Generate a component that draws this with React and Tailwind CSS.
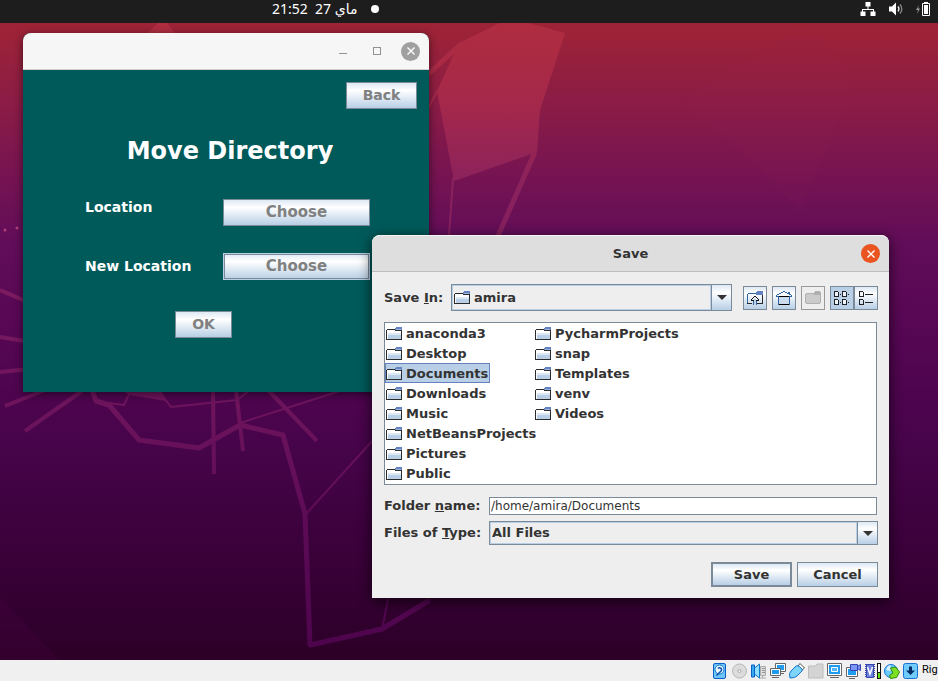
import React from "react";

const FONT = "font-['DejaVu_Sans',sans-serif]";
const metal = "bg-linear-to-b from-[#dde8f3] via-white via-30% to-[#b8cfe5]";

function Wallpaper() {
  return (
    <svg
      className="absolute inset-0 h-full w-full"
      viewBox="0 23 938 637"
      preserveAspectRatio="none"
      aria-hidden="true"
    >
      <defs>
        <linearGradient id="sky" x1="0" y1="0" x2="0" y2="1">
          <stop offset="0" stopColor="#9f2336" />
          <stop offset="0.13" stopColor="#8a1c46" />
          <stop offset="0.22" stopColor="#7a1550" />
          <stop offset="0.34" stopColor="#620d59" />
          <stop offset="0.5" stopColor="#550653" />
          <stop offset="0.66" stopColor="#47044a" />
          <stop offset="0.83" stopColor="#3a013a" />
          <stop offset="1" stopColor="#2c0027" />
        </linearGradient>
        <linearGradient id="ink" gradientUnits="userSpaceOnUse" x1="0" y1="23" x2="0" y2="660">
          <stop offset="0" stopColor="#b02d3f" />
          <stop offset="0.13" stopColor="#a4284b" />
          <stop offset="0.25" stopColor="#8b225c" />
          <stop offset="0.45" stopColor="#7a1a60" />
          <stop offset="0.6" stopColor="#6d145c" />
          <stop offset="0.8" stopColor="#5c0a56" />
          <stop offset="1" stopColor="#4c044c" />
        </linearGradient>
      </defs>
      <rect y="23" width="938" height="637" fill="url(#sky)" />
      <path d="M680 100L810 23L856 80L800 212L740 150Z" fill="#b03060" opacity="0.04" />
      <path d="M0 597L60 660H0Z" fill="#5c0a56" opacity="0.15" />
      <path
        d="M459 43L500 23H528L565 33L540 110L537 152L454 181L437 91L453 56Z"
        fill="url(#ink)"
      />
      <path d="M126 54L158 23H163L186 60Z M125 392L162 392L166 401L129 395Z" fill="url(#ink)" />
      <g fill="none" stroke="url(#ink)" strokeLinejoin="round">
        <path strokeWidth="5" d="M400 100L461 44M535 152L498 236M161 20L186 50" />
        <path strokeWidth="2" d="M453 178L449 236M437 91L410 145" />
        <path
          strokeWidth="4"
          d="M0 290L30 303M0 337L30 342M0 372L30 369M5 406L45 390M25 431L82 391M213 390L214 474M236 390L243 451M268 390L317 441"
        />
        <path
          strokeWidth="5"
          d="M92 390L96 401L109 405L139 440L199 448L240 425L283 435L305 514L310 645L382 629L430 600"
        />
        <path
          strokeWidth="2"
          d="M109 403L124 405L130 392M161 394L171 407L237 400L250 390M240 423L340 391M306 514L373 440M382 629L390 590"
        />
      </g>
      <g fill="#b0407a">
        <circle cx="5" cy="230" r="1.5" />
        <circle cx="17" cy="228" r="1.5" />
      </g>
    </svg>
  );
}

function TopBar() {
  return (
    <header className="flex h-[23px] shrink-0 items-center justify-between bg-[#1d1d1d] pr-[7px] pb-[5px] text-white">
      <div className="flex items-center gap-3.5 pl-[272px] text-[14px] leading-[18px]">
        <time dir="rtl" className="whitespace-pre font-['Noto_Sans','DejaVu_Sans',sans-serif]">
          {"ماي 27  21:52"}
        </time>
        <span className="size-2 rounded-full bg-white" />
      </div>
      <div className="flex items-center gap-3">
        <svg width="16" height="14" viewBox="0 0 16 14" aria-label="Network" fill="#fff">
          <path d="M5.500 0h5v4.500h-2v2.500h5.500v2.500h1.500v4.500h-5v-4.500h2.500v-1.500h-10v1.500h2.500v4.500h-5v-4.500h1.500v-2.500h5.500v-2.500h-2z" />
        </svg>
        <svg width="16" height="14" viewBox="0 0 16 14" aria-label="Volume" fill="none">
          <path d="M1 4.500h3l4-4v13l-4-4h-3z" fill="#fff" />
          <path d="M10 4.500q2 2.500 0 5" stroke="#eee" strokeWidth="1.300" />
          <path d="M12 2.500q3.600 4.500 0 9" stroke="#888" strokeWidth="1.300" />
        </svg>
        <svg width="15" height="16" viewBox="0 0 15 16" aria-label="Battery" fill="none">
          <path d="M3 4L0 9h2l-1 4L4 7.500H2z" fill="#999" />
          <path d="M6.500 2.500h7v12h-7z" stroke="#fff" />
          <path d="M8 4h4v9H8zM8 1h4v1H8z" fill="#fff" />
        </svg>
      </div>
    </header>
  );
}

function MoveButton({ children, className = "", focused = false }) {
  return (
    <button
      type="button"
      className={`h-[27px] border pb-px leading-[24px] font-bold text-[#808080] ${metal} ${
        focused ? "border-[#b8cfe5] shadow-[inset_0_0_0_1px_#7a8a99]" : "border-[#7a8a99]"
      } ${className}`}
    >
      {children}
    </button>
  );
}

function MoveWindow() {
  return (
    <section
      aria-label="Move Directory"
      className="absolute top-[10px] left-[23px] flex h-[359px] w-[406px] flex-col overflow-hidden rounded-t-lg bg-[#005a5a] shadow-[0_2px_8px_rgba(0,0,0,0.55)]"
    >
      <div className="flex h-[37px] shrink-0 items-center justify-end gap-6 border-b border-[#cfcfcf] bg-[#f6f6f6] pr-[9px]">
        <button type="button" aria-label="Minimize" className="flex h-4 w-2 items-center">
          <span className="mt-[5px] h-px w-2 bg-[#929292]" />
        </button>
        <button type="button" aria-label="Maximize" className="ml-0.5 size-2 border border-[#929292]" />
        <button
          type="button"
          aria-label="Close"
          className="-ml-1 flex size-[19px] items-center justify-center rounded-full bg-[#a0a0a0]"
        >
          <svg width="8" height="8" viewBox="0 0 8 8" stroke="#fff" strokeWidth="1.400" aria-hidden="true">
            <path d="M0.500 0.500l7 7M7.500 0.500l-7 7" />
          </svg>
        </button>
      </div>
      <div className="flex flex-col text-[14px] text-white">
        <div className="flex justify-end pt-3 pr-3">
          <MoveButton className="w-[71px]">Back</MoveButton>
        </div>
        <h1 className="mt-[26px] pl-2 text-center text-[24px] leading-8 font-bold">Move Directory</h1>
        <div className="mt-8 flex pl-[62px]">
          <span className="w-[138px] leading-4 font-bold">Location</span>
          <MoveButton className="w-[147px] text-[15px]">Choose</MoveButton>
        </div>
        <div className="mt-[27px] flex items-center pl-[62px]">
          <span className="w-[138px] font-bold">New Location</span>
          <MoveButton focused className="w-[147px] text-[15px]">
            Choose
          </MoveButton>
        </div>
        <div className="mt-[31px] pl-[152px]">
          <MoveButton className="w-[57px]">OK</MoveButton>
        </div>
      </div>
    </section>
  );
}

function Folder() {
  return (
    <svg
      width="16"
      height="13"
      viewBox="0 0 16 13"
      shapeRendering="crispEdges"
      aria-hidden="true"
      className="shrink-0"
    >
      <rect x="1" y="3" width="14" height="9" fill="#fff" />
      <rect x="2" y="6" width="13" height="2" fill="#dbe7f3" />
      <rect x="2" y="8" width="13" height="4" fill="#b8cfe5" />
      <path d="M0 3h1v9h-1zM1 2h8v1h-8zM0 12h16v1h-16zM15 3h1v9h-1zM9 3h6v1h-6z" fill="#2b2b2b" />
      <path d="M10 0h6v1h-6zM9 1h7v2h-7z" fill="#6382bf" />
      <rect x="10" y="2" width="5" height="1" fill="#9cb3dc" />
    </svg>
  );
}

function Arrow() {
  return (
    <span
      className={`pointer-events-none flex w-5 shrink-0 items-center justify-center border-l border-[#7a8a99] ${metal}`}
    >
      <svg width="10" height="5" viewBox="0 0 10 5" aria-hidden="true">
        <path d="M0 0h10l-5 5z" fill="#333" />
      </svg>
    </span>
  );
}

function Combo({ id, value, folder = false, className = "" }) {
  return (
    <div className={`flex border border-[#7a8a99] bg-[#eee] ${className}`}>
      <div className="flex min-w-0 flex-1 items-center gap-1 border border-[#b8cfe5] pl-px">
        {folder && <Folder />}
        <select id={id} className="min-w-0 flex-1 appearance-none bg-transparent font-bold text-[#333] outline-none">
          <option>{value}</option>
        </select>
      </div>
      <Arrow />
    </div>
  );
}

function ToolButton({ label, children, className = "", ...rest }) {
  return (
    <button
      type="button"
      aria-label={label}
      className={`flex size-6 shrink-0 items-center justify-center border ${className}`}
      {...rest}
    >
      {children}
    </button>
  );
}

function ToolBar() {
  return (
    <div className="flex">
      <ToolButton label="Up One Level" className={`mr-[5px] border-[#7a8a99] ${metal}`}>
        <svg width="16" height="14" viewBox="0 0 16 14" shapeRendering="crispEdges" aria-hidden="true">
          <path d="M0 3h1v10h-1zM1 2h8v1h-8z" fill="#31639c" />
          <path d="M0 12h5v1h-5zM10 12h6v1h-6zM15 4h1v9h-1z" fill="#2b2b2b" />
          <path d="M10 0h6v1h-6zM9 1h7v3h-7z" fill="#6382bf" />
          <path d="M6 9h1v5h-1zM9 9h1v5h-1z" fill="#31639c" />
          <path d="M7 8h2v5h-2z" fill="#b8cfe5" />
          <path d="M7 5h2v1h-2zM6 6h1v1h-1zM9 6h1v1h-1zM5 7h1v1h-1zM10 7h1v1h-1zM4 8h1v1h2v1h-3zM11 8h1v2h-3v-1h2z" fill="#111" />
        </svg>
      </ToolButton>
      <ToolButton label="Home" className={`mr-[5px] border-[#7a8a99] ${metal}`}>
        <svg width="16" height="14" viewBox="0 0 16 14" shapeRendering="crispEdges" aria-hidden="true">
          <path d="M3 6h10v7h-10z" fill="#c9dbec" />
          <path
            d="M7 0h2v1h-2zM5 1h2v1h-2zM9 1h2v1h-2zM3 2h2v1h-2zM11 2h1v-1h2v3h-1v-1h-2zM1 3h2v1h-2zM14 3h1v1h-1zM0 4h1v1h-1zM15 4h1v1h-1zM2 6h1v8h-1zM13 6h1v8h-1z"
            fill="#31639c"
          />
          <path d="M0 5h3v1h-3zM13 5h3v1h-3z" fill="#31639c" />
          <path d="M3 5h10v1h-10zM3 13h10v1h-10z" fill="#000" />
        </svg>
      </ToolButton>
      <ToolButton label="Create New Folder" disabled className="mr-[5px] border-[#999] bg-[#eee]">
        <svg width="16" height="13" viewBox="0 0 16 13" shapeRendering="crispEdges" aria-hidden="true">
          <path d="M1 2h8v-1h1v-1h5v1h1v11h-1v1h-14v-1h-1v-9h1z" fill="#b0b0b0" />
          <path d="M1 3h8v1h6v8h-14z" fill="#cbcbcb" />
        </svg>
      </ToolButton>
      <ToolButton label="List" aria-pressed="true" className="border-[#7a8a99] bg-[#b8cfe5]">
        <svg width="16" height="14" viewBox="0 0 16 14" shapeRendering="crispEdges" aria-hidden="true">
          <path d="M1 1h3v4h-3zM9 1h3v4h-3zM1 9h3v4h-3zM9 9h3v4h-3z" fill="#eef4fb" />
          <path
            fillRule="evenodd"
            fill="#222"
            d="M0 0h4v1h1v5h-5zM1 1v4h3v-4zM8 0h4v1h1v5h-5zM9 1v4h3v-4zM0 8h4v1h1v5h-5zM1 9v4h3v-4zM8 8h4v1h1v5h-5zM9 9v4h3v-4zM6 3h1v1h-1zM14 3h1v1h-1zM6 11h1v1h-1zM14 11h1v1h-1z"
          />
        </svg>
      </ToolButton>
      <ToolButton label="Details" className={`border-[#7a8a99] ${metal}`}>
        <svg width="14" height="14" viewBox="0 0 14 14" shapeRendering="crispEdges" aria-hidden="true">
          <path
            fillRule="evenodd"
            fill="#222"
            d="M0 0h4v1h1v5h-5zM1 1v4h3v-4zM0 8h4v1h1v5h-5zM1 9v4h3v-4zM6 3h8v1h-8zM6 11h8v1h-8z"
          />
        </svg>
      </ToolButton>
    </div>
  );
}

const folders = [
  ["anaconda3", "Desktop", "Documents", "Downloads", "Music", "NetBeansProjects", "Pictures", "Public"],
  ["PycharmProjects", "snap", "Templates", "venv", "Videos"],
];

function SaveDialog() {
  return (
    <section
      role="dialog"
      aria-label="Save"
      className="absolute top-[212px] left-[372px] flex w-[517px] flex-col rounded-t-lg bg-[#eee] text-[13px] font-bold text-[#333] shadow-[0_3px_14px_rgba(0,0,0,0.7)]"
    >
      <div className="flex h-[37px] items-center rounded-t-lg border-t border-b border-t-[#f4f4f4] border-b-[#bcbcbc] bg-[#dedede] pr-[9px] pl-7">
        <h2 className="flex-1 text-center">Save</h2>
        <button
          type="button"
          aria-label="Close"
          className="flex size-[19px] items-center justify-center rounded-full bg-[#e95420]"
        >
          <svg width="8" height="8" viewBox="0 0 8 8" stroke="#fff" strokeWidth="1.400" aria-hidden="true">
            <path d="M0.500 0.500l7 7M7.500 0.500l-7 7" />
          </svg>
        </button>
      </div>
      <div className="flex flex-col pt-3 pr-[11px] pb-[11px] pl-3">
        <div className="flex items-center">
          <label htmlFor="save-in" className="w-[67px] shrink-0 whitespace-nowrap">
            Save <u>I</u>n:
          </label>
          <Combo id="save-in" value="amira" folder className="mr-[11px] h-[27px] flex-1" />
          <ToolBar />
        </div>
        <div className="mt-[11px] mr-px flex h-[163px] border border-[#7a8a99] bg-white pl-px">
          {folders.map((column) => (
            <ul key={column[0]} className="w-[149px]">
              {column.map((name) => (
                <li key={name} className="flex h-5">
                  <span
                    className={
                      name === "Documents"
                        ? "-ml-px flex items-center gap-1 border border-[#6382bf] bg-[#b8cfe5] pr-px"
                        : "flex items-center gap-1"
                    }
                  >
                    <Folder />
                    <span className="pt-0.5 leading-4">{name}</span>
                  </span>
                </li>
              ))}
            </ul>
          ))}
        </div>
        <div className="mt-[11px] mr-px flex h-5 items-center">
          <label htmlFor="folder" className="w-[105px] shrink-0 whitespace-nowrap">
            Folder <u>n</u>ame:
          </label>
          <input
            id="folder"
            defaultValue="/home/amira/Documents"
            className="h-[18px] min-w-0 flex-1 border border-[#7a8a99] bg-white px-px text-[12px] font-normal outline-none"
          />
        </div>
        <div className="mt-[5px] flex items-center">
          <label htmlFor="file-type" className="w-[105px] shrink-0 whitespace-nowrap">
            Files of <u>T</u>ype:
          </label>
          <Combo id="file-type" value="All Files" className="h-6 flex-1" />
        </div>
        <div className="mt-[17px] flex justify-end gap-[5px]">
          <button type="button" className={`h-[25px] w-[81px] border-2 border-[#7a8a99] ${metal}`}>
            Save
          </button>
          <button type="button" className={`h-[25px] w-[81px] border border-[#7a8a99] ${metal}`}>
            Cancel
          </button>
        </div>
      </div>
    </section>
  );
}

function StatusBar() {
  return (
    <footer className="flex h-[21px] shrink-0 items-center justify-end gap-[3px] overflow-hidden bg-[#f0f0f0] font-['Roboto','Noto_Sans',sans-serif] text-[11px] text-black">
      <svg width="16" height="16" viewBox="0 0 16 16" aria-label="Hard disk">
        <rect x="0.500" y="0.500" width="12" height="15" rx="1.500" fill="#6fc4fa" stroke="#0a5fc8" />
        <circle cx="6.500" cy="6.500" r="4.500" fill="#e8f6ff" stroke="#1177cc" />
        <path d="M5 5.500a2 2 0 1 1 2.500 3l-4 4" fill="none" stroke="#0a4fa8" strokeWidth="1.500" />
      </svg>
      <svg width="16" height="16" viewBox="0 0 16 16" aria-label="Optical disk">
        <circle cx="7.500" cy="8" r="7" fill="#dcdcdc" stroke="#b8b8b8" />
        <circle cx="7.500" cy="8" r="1.500" fill="#f4f4f4" stroke="#aaa" />
      </svg>
      <svg width="16" height="16" viewBox="0 0 16 16" aria-label="Audio">
        <path d="M9.500 3.500h5v9h-5zM8 15h7M11.500 12v3" fill="#ddd" stroke="#aaa" />
        <path d="M11 5.500h3M11 7.500h3M11 9.500h3" stroke="#999" />
        <path d="M3.500 5l5-4v14l-5-4z" fill="#8fe0fb" stroke="#1177cc" />
        <path d="M0.500 2h3v12h-3z" fill="#39a9ee" stroke="#0a5fc8" />
      </svg>
      <svg width="16" height="16" viewBox="0 0 16 16" aria-label="Network">
        <path d="M5.500 0.500h10v8h-10zM9 10.500h5" fill="#fff" stroke="#666" />
        <path d="M7 2h7v5h-7z" fill="#1f9cf0" />
        <path d="M0.500 5.500h10v7h-10zM2 14.500h7" fill="#fff" stroke="#666" />
        <path d="M2 7h7v4h-7z" fill="#1f9cf0" />
      </svg>
      <svg width="16" height="16" viewBox="0 0 16 16" aria-label="USB">
        <path d="M9 3l2-2.500 4.500 4.500-2.500 2z" fill="#fff" stroke="#555" />
        <path d="M1 15q-1.500-5 1-7l5-5q2-1 4 1l1 1q2 2 1 3l-5 5q-2 2-7 2z" fill="#7fd4fb" stroke="#1177cc" />
      </svg>
      <svg width="16" height="16" viewBox="0 0 16 16" aria-label="Shared folders">
        <path d="M0.500 15v-12h7l1.500-2h6v14z" fill="#d4d4d4" stroke="#bcbcbc" />
      </svg>
      <svg width="16" height="16" viewBox="0 0 16 16" aria-label="Display">
        <path d="M0.500 0.500h14v12h-14zM3 14.500h9" fill="#fff" stroke="#666" />
        <path d="M2 2h11v9h-11z" fill="#1f9cf0" />
        <path d="M4.500 4.500h6v4h-6z" fill="#4db8ff" stroke="#fff" />
      </svg>
      <svg width="16" height="16" viewBox="0 0 16 16" aria-label="Recording">
        <path d="M0.500 4.500h11v9h-11zM3 15.500h6" fill="#fff" stroke="#666" />
        <path d="M2 6h8v6h-8z" fill="#1f9cf0" />
        <path d="M4.500 1.500h7v6h-7zM11.500 3.500l3-2v6l-3-2z" fill="#7d96f5" stroke="#3344b0" />
      </svg>
      <svg width="16" height="16" viewBox="0 0 16 16" aria-label="Processor">
        <path d="M1 1v14M9 1v14" stroke="#3647a8" strokeWidth="2" strokeDasharray="1 1" />
        <path d="M1.500 1.500h7v13h-7z" fill="#6d80e0" stroke="#3647a8" />
        <path d="M2.500 4l2.500 7 2.500-7" fill="none" stroke="#fff" strokeWidth="1.500" />
        <path d="M12 0h4v16h-4z" fill="#111" />
        <path d="M13 1h2v8h-2z" fill="#fff" />
        <path d="M13 10h2v5h-2z" fill="#5fe010" />
      </svg>
      <svg width="16" height="16" viewBox="0 0 16 16" aria-label="Mouse integration">
        <circle cx="7" cy="8" r="6.500" fill="#69c9f8" stroke="#1670d5" />
        <path d="M2.500 7q0-4 4-5v6z" fill="#d9f0ff" />
        <path d="M6.500 5l5-1 4 5-3 5.500-6 1-1-3 3.500-2.500z" fill="#7ee020" stroke="#2b8a10" />
      </svg>
      <svg width="16" height="16" viewBox="0 0 16 16" aria-label="Host key">
        <rect x="0.500" y="0.500" width="14" height="15" rx="2" fill="#6fccfb" stroke="#1670d5" />
        <path d="M6 3.500h3v4h3l-4.500 4.500-4.500-4.500h3z" fill="#062c65" />
      </svg>
      <span className="w-4 shrink-0">Rig</span>
    </footer>
  );
}

export default function App() {
  return (
    <div className={`flex min-h-screen flex-col overflow-hidden ${FONT}`}>
      <TopBar />
      <main className="relative flex-1 overflow-hidden">
        <Wallpaper />
        <MoveWindow />
        <SaveDialog />
      </main>
      <StatusBar />
    </div>
  );
}
